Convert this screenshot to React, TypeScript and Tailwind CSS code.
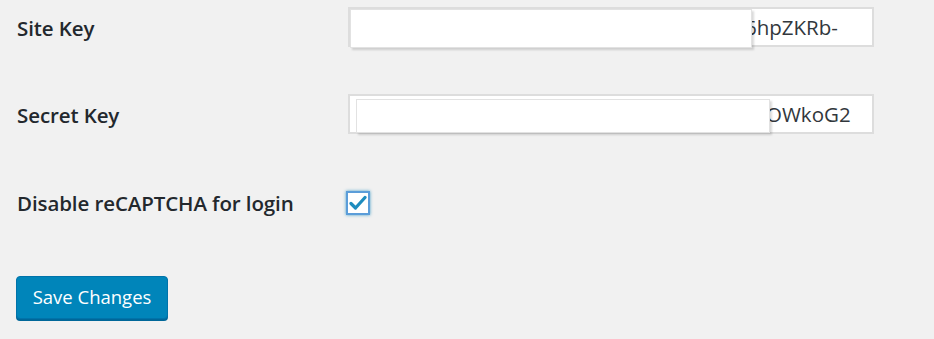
import React from 'react';

const font = { fontFamily: '"Open Sans", "Noto Sans", "Liberation Sans", sans-serif' };

function KeyField({ value, textLeft, cover }: { value: string; textLeft: number; cover: string }) {
  return (
    <div className="relative w-[526px] h-[40px] border-2 border-[#dddddd] bg-white flex items-center">
      <span className="absolute text-[20.5px] text-[#32373c] leading-none" style={{ left: textLeft }}>
        {value}
      </span>
      <div className={`absolute bg-white border border-[#e2e2e2] shadow-[2px_2px_2px_rgba(0,0,0,0.15)] ${cover}`} />
    </div>
  );
}

export default function App() {
  return (
    <div className="w-[934px] h-[339px] bg-[#f1f1f1] text-[#23282d] overflow-hidden" style={font}>
      <div className="flex flex-col pl-[17px]">
        <div className="flex items-center h-[40px] mt-[7px]">
          <div className="w-[331px] pt-[3px] text-[20.5px] font-semibold tracking-[-0.1px]">Site Key</div>
          <KeyField value="6hpZKRb-" textLeft={395} cover="left-0 top-0 w-[402px] h-[39px]" />
        </div>
        <div className="flex items-center h-[40px] mt-[47px]">
          <div className="w-[331px] pt-[3px] text-[20.5px] font-semibold tracking-[-0.1px]">Secret Key</div>
          <KeyField value="OWkoG2" textLeft={416} cover="left-[6px] top-[3px] w-[414px] h-[34px]" />
        </div>
        <div className="flex items-center h-[26px] mt-[56px]">
          <div className="w-[329px] text-[20.5px] font-semibold tracking-[-0.1px]">Disable reCAPTCHA for login</div>
          <div className="w-[24px] h-[24px] bg-white border-2 border-[#5b9dd9] shadow-[0_0_3px_rgba(30,140,190,0.8)] flex items-center justify-center">
            <svg width="18" height="16" viewBox="0 0 18 16">
              <path d="M2 8.5 L6.5 13 L16 2.5" fill="none" stroke="#1e8cbe" strokeWidth="3.2" strokeLinecap="round" strokeLinejoin="round" />
            </svg>
          </div>
        </div>
        <div className="mt-[60px]">
          <button className="w-[152px] h-[43px] -ml-[1px] pb-[1px] rounded-[4px] bg-[#0085ba] border border-[#0073aa] shadow-[0_2px_0_#006799] text-white text-[18.5px]" style={font}>
            Save Changes
          </button>
        </div>
      </div>
    </div>
  );
}
